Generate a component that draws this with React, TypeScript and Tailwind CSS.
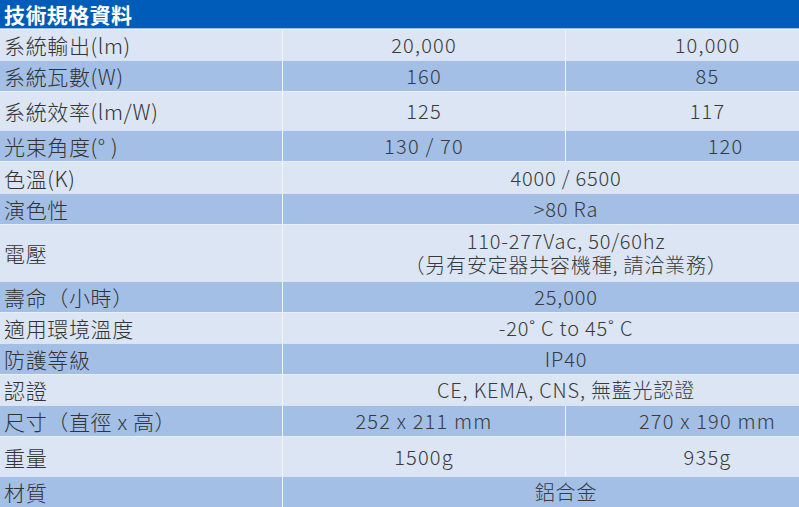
import React from 'react';

type Row = {
  label: string;
  values: string[] | string;
  h: string;
  dark?: boolean;
  shiftLast?: boolean;
};

const rows: Row[] = [
  { label: '系統輸出(lm)', values: ['20,000', '10,000'], h: 'h-[31px]' },
  { label: '系統瓦數(W)', values: ['160', '85'], h: 'h-[31px]', dark: true },
  { label: '系統效率(lm/W)', values: ['125', '117'], h: 'h-[39px]' },
  { label: '光束角度(° )', values: ['130 / 70', '120'], h: 'h-[31px]', dark: true, shiftLast: true },
  { label: '色溫(K)', values: '4000 / 6500', h: 'h-[32px]' },
  { label: '演色性', values: '>80 Ra', h: 'h-[31px]', dark: true },
  { label: '電壓', values: '110-277Vac, 50/60hz\n（另有安定器共容機種, 請洽業務）', h: 'h-[57px]' },
  { label: '壽命（小時）', values: '25,000', h: 'h-[31px]', dark: true },
  { label: '適用環境溫度', values: '-20˚ C to 45˚ C', h: 'h-[31px]' },
  { label: '防護等級', values: 'IP40', h: 'h-[31px]', dark: true },
  { label: '認證', values: 'CE, KEMA, CNS, 無藍光認證', h: 'h-[31px]' },
  { label: '尺寸（直徑 x 高）', values: ['252 x 211 mm', '270 x 190 mm'], h: 'h-[31px]', dark: true },
  { label: '重量', values: ['1500g', '935g'], h: 'h-[40px]' },
  { label: '材質', values: '鋁合金', h: 'h-[31px]', dark: true },
];

const SpecRow: React.FC<{ row: Row }> = ({ row }) => {
  const bg = row.dark ? 'bg-[#a3bfe6]' : 'bg-[#dbe5f4]';
  return (
    <div className={`grid grid-cols-[283px_1fr] border-t border-[#eef3fb]/70 ${row.h} ${bg}`}>
      <div className="flex items-center pl-1 text-[21px] leading-[26px] tracking-[0.03em] font-light text-[#333333] border-r border-[#f2f6fc]">
        {row.label}
      </div>
      {Array.isArray(row.values) ? (
        <div className="grid grid-cols-[283px_283px]">
          <div className="flex items-center justify-center text-[20px] leading-[24px] tracking-[0.06em] font-light text-[#3a3a3a] border-r border-[#f2f6fc]">
            {row.values[0]}
          </div>
          <div
            className={`flex items-center justify-center text-[20px] leading-[24px] tracking-[0.06em] font-light text-[#3a3a3a] ${
              row.shiftLast ? 'pl-[36px]' : ''
            }`}
          >
            {row.values[1]}
          </div>
        </div>
      ) : (
        <div className="flex flex-col items-center justify-center text-[20px] leading-[24px] tracking-[0.04em] font-light text-[#3a3a3a]">
          {row.values.split('\n').map(line => (
            <span key={line} className="block">
              {line}
            </span>
          ))}
        </div>
      )}
    </div>
  );
};

const App: React.FC = () => {
  return (
    <div className="w-[799px] h-[507px] overflow-hidden bg-white font-['Noto_Sans_CJK_TC','Noto_Sans',sans-serif]">
      <div className="w-[849px]">
        <div className="h-[28px] bg-[#005cb9] flex items-center pl-1 text-[21px] leading-[28px] tracking-[0.02em] font-bold text-white">
          技術規格資料
        </div>
        <div className="h-px bg-[#9cbce6]" />
        {rows.map(row => (
          <SpecRow key={row.label} row={row} />
        ))}
      </div>
    </div>
  );
};

export default App;
